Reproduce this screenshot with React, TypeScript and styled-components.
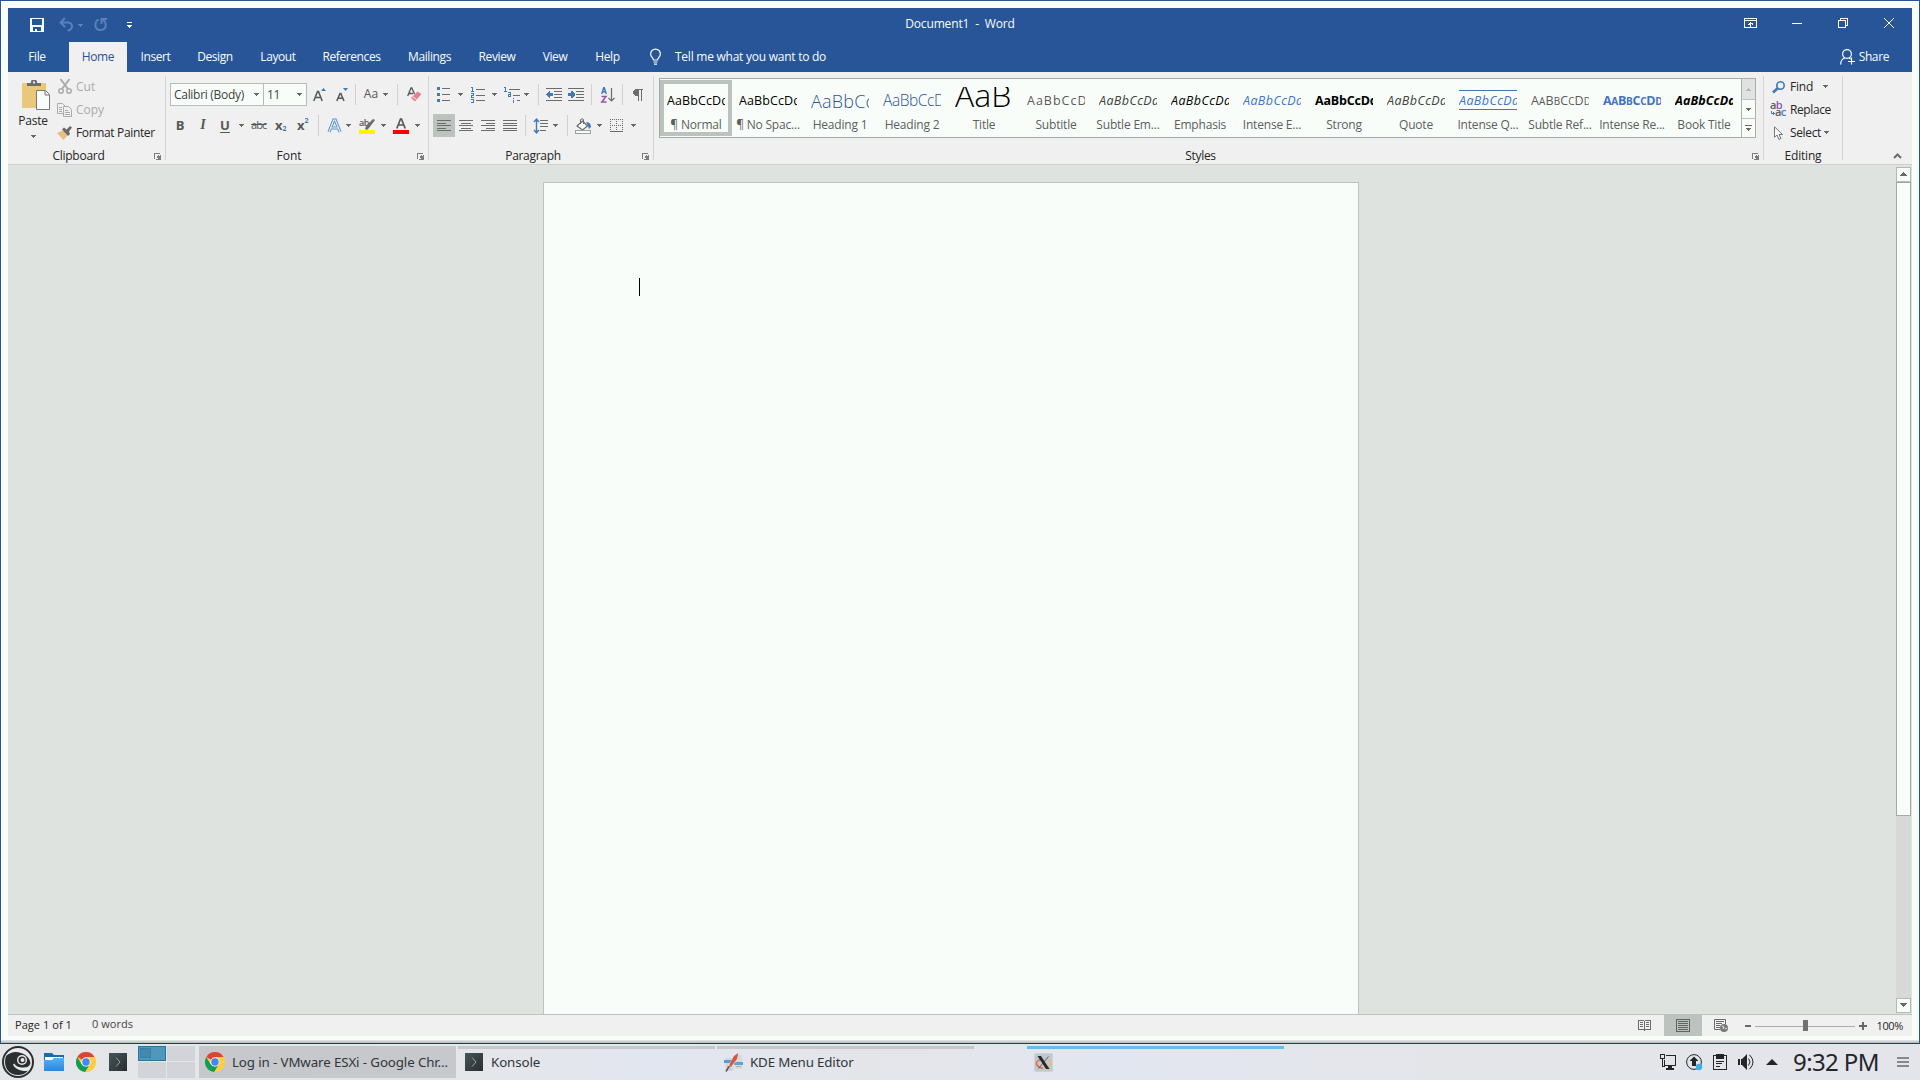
import React from 'react';
import styled, { createGlobalStyle, css } from 'styled-components';

const colors = {
    brand: '#285598',
    paper: '#f8fdf9',
    ribbon: '#f0f0f0',
    canvas: '#dfe3e0',
    line: '#bcc2be',
    divider: '#d2d3d2',
    icon: '#6a6d6b',
    accent: '#3f7ab5',
    text: '#262626',
    label: '#5c605d',
};

const GlobalStyle = createGlobalStyle`
    * {
        box-sizing: border-box;
    }
    body {
        margin: 0;
        overflow: hidden;
        font-family: 'Open Sans', 'Noto Sans', sans-serif;
        font-size: 12px;
        color: ${colors.text};
    }
`;

const Screen = styled.div`
    width: 1920px;
    height: 1080px;
    display: flex;
    flex-direction: column;
`;

const WindowFrame = styled.div`
    height: 1044px;
    padding: 7px 7px 0;
    display: flex;
    flex-direction: column;
    background: ${colors.paper};
    border: 1px solid ${colors.brand};
    border-bottom-color: #1f3a68;
`;

const FrameShadow = styled.div`
    height: 3px;
    margin: 4px -7px 0;
    background: linear-gradient(#e6eae7, #b4bab6);
`;

interface GlyphProps {
    $ml?: number;
    $mt?: number;
}

const Glyph = styled.svg<GlyphProps>`
    display: block;
    flex: none;
    overflow: visible;
    margin-left: ${({ $ml }) => $ml || 0}px;
    margin-top: ${({ $mt }) => $mt || 0}px;
`;

interface TextProps {
    $ml?: number;
    $mt?: number;
    $ls?: number;
    $size?: number;
    $color?: string;
}

const Text = styled.span<TextProps>`
    display: block;
    flex: none;
    white-space: pre;
    line-height: 16px;
    margin-left: ${({ $ml }) => $ml || 0}px;
    margin-top: ${({ $mt }) => $mt || 0}px;
    letter-spacing: ${({ $ls }) => ($ls === undefined ? -0.4 : $ls)}px;
    ${({ $size }) => $size && css`font-size: ${$size}px;`}
    ${({ $color }) => $color && css`color: ${$color};`}
`;

/* ---------- title bar ---------- */

const TitleBar = styled.header`
    flex: none;
    height: 34px;
    display: grid;
    grid-template-columns: 1fr auto 1fr;
    background: ${colors.brand};
    color: ${colors.paper};
`;

const QuickAccess = styled.div`
    display: flex;
    align-items: flex-start;
    padding: 10px 0 0 22px;
`;

const WindowTitle = styled.div`
    padding-top: 8px;
`;

const WindowButtons = styled.div`
    display: flex;
    justify-content: flex-end;
    padding: 10px 18px 0 0;
`;

const TabBar = styled.nav`
    flex: none;
    height: 30px;
    display: flex;
    background: ${colors.brand};
    color: ${colors.paper};
`;

const Tab = styled.div<{ $w: number; $kind?: 'file' | 'active' }>`
    width: ${({ $w }) => $w}px;
    display: flex;
    justify-content: center;
    padding-top: 7px;
    ${({ $kind }) =>
        $kind === 'file' &&
        css`
            padding-right: 3px;
            background: #265899;
        `}
    ${({ $kind }) =>
        $kind === 'active' &&
        css`
            background: ${colors.ribbon};
            color: ${colors.brand};
        `}
`;

const TabExtra = styled.div<{ $right?: boolean }>`
    display: flex;
    align-items: flex-start;
    padding-top: 7px;
    ${({ $right }) =>
        $right
            ? css`
                  margin-left: auto;
                  padding-right: 23px;
              `
            : css`
                  padding-left: 17px;
              `}
`;

/* ---------- ribbon ---------- */

const Ribbon = styled.section`
    flex: none;
    height: 93px;
    display: flex;
    background: ${colors.ribbon};
    border-bottom: 1px solid #cfd1cf;
`;

const Group = styled.div<{ $w: number }>`
    flex: none;
    width: ${({ $w }) => $w}px;
`;

const GroupDivider = styled.div`
    flex: none;
    width: 1px;
    height: 84px;
    margin-top: 4px;
    background: ${colors.divider};
`;

const GroupBody = styled.div`
    height: 76px;
    display: flex;
`;

const GroupFooter = styled.div`
    height: 16px;
    display: flex;
`;

const GroupLabel = styled.div`
    flex: 1;
    display: flex;
    justify-content: center;
`;

const PasteButton = styled.div`
    width: 49px;
    padding: 7px 0 0 1px;
    display: flex;
    flex-direction: column;
    align-items: center;
`;

const Stack = styled.div`
    padding-top: 3px;
`;

const StackRow = styled.div`
    height: 23px;
    display: flex;
    align-items: center;
`;

const StackIcon = styled.div<{ $w: number }>`
    width: ${({ $w }) => $w}px;
    display: flex;
    justify-content: center;
`;

const ToolRows = styled.div<{ $pl: number }>`
    padding: 11px 0 0 ${({ $pl }) => $pl}px;
    display: flex;
    flex-direction: column;
    gap: 8px;
`;

const ToolRow = styled.div`
    height: 23px;
    display: flex;
    align-items: center;
`;

const Rule = styled.div<{ $ml: number }>`
    flex: none;
    width: 1px;
    height: 21px;
    margin-left: ${({ $ml }) => $ml}px;
    background: #cfd0cf;
`;

const Combo = styled.div<{ $w: number; $joined?: boolean }>`
    flex: none;
    width: ${({ $w }) => $w}px;
    height: 23px;
    display: flex;
    align-items: center;
    justify-content: space-between;
    padding: 0 4px 0 3px;
    background: ${colors.paper};
    border: 1px solid #b6bcb8;
    color: #3f4240;
    margin-left: ${({ $joined }) => ($joined ? -1 : 0)}px;
`;

const Letter = styled.span<{ $w: number; $ml?: number }>`
    flex: none;
    width: ${({ $w }) => $w}px;
    margin-top: -1px;
    margin-left: ${({ $ml }) => $ml || 0}px;
    text-align: center;
    line-height: 16px;
    white-space: nowrap;
    color: #555856;
    b, i, u {
        font-size: 13px;
    }
    i {
        font-family: 'Liberation Serif', serif;
        font-weight: 700;
        font-size: 14px;
    }
    u {
        font-weight: 700;
        text-underline-offset: 2px;
    }
`;

const Script = styled.span<{ $ml: number; $up?: boolean }>`
    flex: none;
    width: 14px;
    display: flex;
    align-items: ${({ $up }) => ($up ? 'flex-start' : 'flex-end')};
    margin-top: -2px;
    margin-left: ${({ $ml }) => $ml}px;
    height: 16px;
    line-height: 16px;
    font-size: 13px;
    font-weight: 700;
    color: #555856;
    small {
        font-size: 7px;
        line-height: 8px;
        color: ${colors.accent};
    }
`;

const Struck = styled.span`
    flex: none;
    width: 16px;
    margin-top: -1px;
    margin-left: 7px;
    font-size: 11px;
    letter-spacing: -0.9px;
    line-height: 16px;
    color: #555856;
    text-decoration: line-through;
`;

const Toggle = styled.div`
    width: 22px;
    height: 23px;
    display: flex;
    align-items: center;
    justify-content: center;
    background: ${colors.line};
`;

/* ---------- styles gallery ---------- */

const Gallery = styled.div`
    width: 1097px;
    height: 60px;
    margin: 6px 0 0 5px;
    display: flex;
    background: ${colors.paper};
    border: 1px solid #a3aaae;
`;

const StyleCard = styled.div<{ $selected?: boolean }>`
    flex: none;
    width: 72px;
    height: 56px;
    margin-top: 1px;
    padding: ${({ $selected }) => ($selected ? '3px 3px 0' : '7px 7px 0')};
    ${({ $selected }) => $selected && css`border: 4px solid ${colors.line};`}
`;

interface SampleProps {
    $size?: number;
    $color?: string;
    $weight?: number;
    $italic?: boolean;
    $ruled?: boolean;
    $ls?: number;
    $lh?: number;
}

const Sample = styled.div<SampleProps>`
    width: 58px;
    height: 26px;
    overflow: hidden;
    white-space: nowrap;
    line-height: ${({ $lh }) => $lh || 28}px;
    font-size: ${({ $size }) => $size || 12.5}px;
    color: ${({ $color }) => $color || '#000'};
    font-weight: ${({ $weight }) => $weight || 400};
    font-style: ${({ $italic }) => ($italic ? 'italic' : 'normal')};
    letter-spacing: ${({ $ls }) => $ls || 0}px;
    small {
        font-size: 0.8em;
    }
    ${({ $ruled }) =>
        $ruled &&
        css`
            height: 20px;
            margin: 3px 0 7px;
            line-height: 20px;
            border-top: 1px solid #4472c4;
            border-bottom: 1px solid #4472c4;
        `}
`;

const StyleName = styled.div`
    margin: 4px -7px 0;
    text-align: center;
    line-height: 16px;
    letter-spacing: -0.2px;
    white-space: nowrap;
    color: ${colors.label};
`;

const GalleryNav = styled.div`
    width: 15px;
    margin: -1px -1px -1px auto;
    display: grid;
    grid-template-rows: 20px 19px 19px;
    border: 1px solid #a9afac;
`;

const NavCell = styled.div<{ $off?: boolean }>`
    display: flex;
    align-items: center;
    justify-content: center;
    background: ${({ $off }) => ($off ? '#dfe2e0' : colors.paper)};
    & + & {
        border-top: 1px solid ${colors.line};
    }
`;

/* ---------- document ---------- */

const Workspace = styled.main`
    flex: none;
    height: 850px;
    display: flex;
    background: ${colors.canvas};
    border-bottom: 1px solid #bcc3be;
`;

const Page = styled.article`
    width: 816px;
    margin: 17px 0 0 535px;
    padding: 95px;
    background: ${colors.paper};
    border: 1px solid ${colors.line};
    border-bottom: 0;
`;

const Caret = styled.div`
    width: 1px;
    height: 18px;
    background: #000;
`;

const ScrollBar = styled.div`
    width: 15px;
    height: 846px;
    margin: 2px 1px 0 auto;
    display: flex;
    flex-direction: column;
    background: #d8d8d8;
`;

const ScrollButton = styled.div`
    height: 15px;
    display: flex;
    align-items: center;
    justify-content: center;
    padding-bottom: 1px;
    background: ${colors.paper};
    border: 1px solid #b4b9b6;
`;

const ScrollThumb = styled.div`
    height: 634px;
    margin-bottom: auto;
    background: ${colors.paper};
    border: 1px solid #a6a9a7;
`;

/* ---------- status bar ---------- */

const StatusBar = styled.footer`
    flex: none;
    height: 21px;
    display: flex;
    align-items: center;
    background: ${colors.ribbon};
`;

const StatusRight = styled.div`
    display: flex;
    align-items: center;
    height: 21px;
    margin-left: auto;
    padding-right: 9px;
`;

const ViewToggle = styled.div`
    width: 38px;
    height: 21px;
    margin-left: 13px;
    padding-left: 12px;
    display: flex;
    align-items: center;
    background: ${colors.line};
`;

const ZoomTrack = styled.div`
    width: 100px;
    height: 11px;
    margin-left: 4px;
    display: flex;
    justify-content: center;
    background: linear-gradient(#a9adab, #a9adab) 0 6px / 100% 1px no-repeat;
`;

const ZoomThumb = styled.div`
    width: 5px;
    height: 11px;
    background: #6f7271;
`;

/* ---------- desktop panel ---------- */

const Panel = styled.div`
    height: 36px;
    display: flex;
    background: linear-gradient(90deg, #e4e5e9 0%, #e5e6ea 25%, #e2e6f0 34%, #e4e5e9 45%, #e2e6f0 58%, #e4e5e9 75%, #e3e5ea 100%);
    font-family: 'Noto Sans', sans-serif;
    color: #31363b;
`;

const Launchers = styled.div`
    display: flex;
    align-items: center;
    width: 138px;
    padding-left: 2px;
`;

const Pager = styled.div`
    width: 57px;
    height: 32px;
    margin-top: 2px;
    display: grid;
    grid-template-columns: 28px 28px;
    grid-template-rows: 15px 16px;
    gap: 1px;
`;

const Desk = styled.div<{ $active?: boolean }>`
    background: #d2d4d9;
    ${({ $active }) =>
        $active &&
        css`
            background: #5096bd;
            border: 1px solid #2e7396;
            &::before {
                content: '';
                display: block;
                width: 9px;
                height: 8px;
                margin: 1px;
                background: #4288b0;
                border: 1px solid #3b7fa5;
            }
        `}
`;

const Task = styled.div<{ $ml: number; $bar: string; $active?: boolean }>`
    width: 257px;
    height: 32px;
    margin: 2px 0 0 ${({ $ml }) => $ml}px;
    padding-left: 6px;
    display: flex;
    align-items: center;
    border-top: 3px solid ${({ $bar }) => $bar};
    padding-bottom: 3px;
    background: ${({ $active }) => ($active ? '#c6c8cc' : 'transparent')};
`;

const TaskIcon = styled.div`
    width: 20px;
    display: flex;
    justify-content: center;
`;

const Tray = styled.div`
    display: flex;
    align-items: center;
    margin-left: auto;
    padding-right: 11px;
`;

const Clock = styled.div`
    width: 88px;
    margin-left: 15px;
    font-size: 24px;
    letter-spacing: -0.6px;
    line-height: 32px;
    white-space: nowrap;
    color: #232629;
`;

/* ---------- icons ---------- */

const Arrow = ({ ml, mt, color = '#666967' }: { ml?: number; mt?: number; color?: string }) => (
    <Glyph $ml={ml} $mt={mt} width={5} height={3} shapeRendering="crispEdges">
        <path d="M0 0h5v1H0zM1 1h3v1H1zM2 2h1v1H2z" fill={color} />
    </Glyph>
);

const Launcher = () => (
    <Glyph $mt={5} width={16} height={7} viewBox="-5 0 16 7" shapeRendering="crispEdges">
        <path d="M0 6V0h6v1H1v5zM3 3l1-1 2 2V2h1v5H2V6h2z" fill="#7c7f7d" />
    </Glyph>
);

const Lines = ({ ml, rows }: { ml?: number; rows: number[][] }) => (
    <Glyph $ml={ml} width={14} height={11} shapeRendering="crispEdges">
        {rows.map(([x, w], i) => (
            <rect key={i} x={x} y={i * 2.5} width={w} height={1} fill={colors.icon} />
        ))}
    </Glyph>
);

const ChromeIcon = () => (
    <svg width={20} height={20} viewBox="0 0 20 20">
        <circle cx={10} cy={10} r={10} fill="#ffcd42" />
        <path d="M10 10 1.3 5A10 10 0 0 1 18.7 5.300H10z" fill="#dc4437" />
        <path d="M10 10 5.700 12.500 1.300 5A10 10 0 0 0 9.300 20L14 12.300z" fill="#109d58" />
        <path d="M10 5.300h8.700A10 10 0 0 1 9.300 20L14 12.300z" fill="#ffcd42" />
        <circle cx={10} cy={10} r={4.700} fill="#f1f1f1" />
        <circle cx={10} cy={10} r={3.700} fill="#4285f4" />
    </svg>
);

const TerminalIcon = ({ ml }: { ml?: number }) => (
    <Glyph $ml={ml} width={18} height={18}>
        <defs>
            <linearGradient id="term" x1="0" y1="0" x2="1" y2="1">
                <stop offset="0" stopColor="#46565a" />
                <stop offset="1" stopColor="#2a2d30" />
            </linearGradient>
        </defs>
        <rect width={18} height={18} fill="url(#term)" />
        <path d="M7 4.500 11 9 7 13.500" fill="none" stroke="#9aa2a4" />
    </Glyph>
);

const FolderIcon = () => (
    <Glyph $ml={10} width={20} height={18}>
        <path d="M0 0h8l2 2h10v6H0z" fill="#1d6ba0" />
        <path d="M1 4h18v4H1z" fill="#fff" />
        <defs>
            <linearGradient id="fold" x1="0" y1="0" x2="0" y2="1">
                <stop offset="0" stopColor="#56b0f4" />
                <stop offset="1" stopColor="#2a87de" />
            </linearGradient>
        </defs>
        <path d="M0 7h8l2-2h10v13H0z" fill="url(#fold)" />
    </Glyph>
);

const StartIcon = () => (
    <Glyph width={32} height={32} viewBox="0 0 32 32">
        <circle cx={16} cy={16} r={15} fill="#e9eaed" stroke="#2b2f30" strokeWidth={2} />
        <path
            d="M4 10C8 6 14 5 19 7c6 2 9 6 9.500 10-1 4-4 4.500-8 4.500-3 0-7-1-8-4l-1.500 1c2 4 6 6 11 6.500 2 0 3 0 4-.5-2 3-6 4.500-10 4.500C8 29 3 23 3 16c0-2 .3-4 1-6z"
            fill="#2b2f30"
        />
        <circle cx={20} cy={14} r={5} fill="#e9eaed" />
        <circle cx={20} cy={14} r={3.600} fill="#2b2f30" />
        <circle cx={20.500} cy={14} r={2} fill="#e9eaed" />
        <path d="M5 8 8.500 5l.5 2z" fill="#e9eaed" />
    </Glyph>
);

const MenuEditorIcon = () => (
    <svg width={19} height={19} viewBox="0 0 19 19">
        <rect x={1.500} y={5} width={8} height={13} fill="#d3d7d8" />
        <rect x={11} y={2} width={7} height={14} fill="#d6dadb" />
        <path d="M3 13.500h5M3 16h4M12 13.500h5" stroke="#aab5b2" />
        <rect y={7} width={9} height={3} fill="#4f9fd0" />
        <rect x={10} y={9} width={9} height={3} fill="#5aa7d6" />
        <path d="M14.500 0 12.500 8 3 18.500 1.500 18 8 6z" fill="#e9ebed" opacity={0.7} />
        <path d="M14.200 0 13 6 7.500 13 4.500 15 6 10.500 10 3z" fill="#d95340" />
        <path d="m5 13.500-3 5" stroke="#5a5250" strokeWidth={1.500} />
    </svg>
);

const XIcon = () => (
    <svg width={19} height={19} viewBox="0 0 19 19">
        <rect x={0.500} y={0.500} width={18} height={18} rx={1} fill="#c0cace" stroke="#ccd4d8" />
        <path d="M7 6.500C3 7.500 1.500 10 3 12c1 1.800 3 3 6 3" fill="none" stroke="#e0714a" strokeWidth={1.700} />
        <path d="M9 15c4 0 7-1.500 7.500-4 .3-2-1-3.500-3-4.500" fill="none" stroke="#e8b87c" strokeWidth={1.400} />
        <path d="M14.500 3.500 4.500 15.500" stroke="#5d6467" />
        <path d="M3.500 3h3.500L15.500 16H12z" fill="#26292b" />
    </svg>
);

/* ---------- data ---------- */

const tabs: { name: string; w: number; kind?: 'file' | 'active' }[] = [
    { name: 'File', w: 61, kind: 'file' },
    { name: 'Home', w: 58, kind: 'active' },
    { name: 'Insert', w: 57 },
    { name: 'Design', w: 62 },
    { name: 'Layout', w: 64 },
    { name: 'References', w: 83 },
    { name: 'Mailings', w: 73 },
    { name: 'Review', w: 62 },
    { name: 'View', w: 54 },
    { name: 'Help', w: 51 },
];

const blue = '#4472c4';

const gallery: (SampleProps & { name: string; text?: string; caps?: boolean })[] = [
    { name: '¶ Normal', $ls: 0.1 },
    { name: '¶ No Spac...', $ls: 0.1 },
    { name: 'Heading 1', $size: 18, $weight: 300, $color: '#2f5496', $ls: 0.2 },
    { name: 'Heading 2', $size: 15.5, $weight: 300, $color: '#2f5496', $ls: -0.4, $lh: 26 },
    { name: 'Title', $size: 32, $weight: 300, text: 'AaB', $lh: 15 },
    { name: 'Subtitle', $color: '#5a5a5a', $ls: 1 },
    { name: 'Subtle Em...', $italic: true, $color: '#404040', $ls: 0.4 },
    { name: 'Emphasis', $italic: true, $ls: 0.4 },
    { name: 'Intense E...', $italic: true, $color: blue, $ls: 0.4 },
    { name: 'Strong', $weight: 700, $ls: -0.2 },
    { name: 'Quote', $italic: true, $color: '#404040', $ls: 0.4 },
    { name: 'Intense Q...', $italic: true, $color: blue, $ruled: true, $ls: 0.4 },
    { name: 'Subtle Ref...', caps: true, $color: '#5a5a5a', $ls: 0.1 },
    { name: 'Intense Re...', caps: true, $weight: 700, $color: blue, $ls: -0.3 },
    { name: 'Book Title', $weight: 700, $italic: true, $ls: 0.1 },
];

/* ---------- sections ---------- */

const Header = () => (
    <>
        <TitleBar>
            <QuickAccess>
                <Glyph width={14} height={14} shapeRendering="crispEdges">
                    <path fillRule="evenodd" d="M0 0h14v14H0zM2 1v6h10V1zM3 9v4h2v-2h2v2h4V9z" fill={colors.paper} />
                </Glyph>
                <Glyph $ml={15} width={14} height={13} fill="none" stroke="#5a80b8" strokeWidth={2}>
                    <path d="M6 0 1.500 4.500 6 9M2 4.500h7.500c5 1 4.500 7.500-1 8" />
                </Glyph>
                <Arrow ml={5} mt={6} color="#5a80b8" />
                <Glyph $ml={11} width={13} height={13} fill="none" stroke="#5a80b8" strokeWidth={2}>
                    <path d="M4.500 1.500C0 4 0 12 6.500 12S13 4.500 9 2M7.500 6V1H13" />
                </Glyph>
                <Glyph $ml={20} $mt={4} width={5} height={6} shapeRendering="crispEdges">
                    <path d="M0 0h5v1H0zM0 3h5v1H0zM1 4h3v1H1zM2 5h1v1H2z" fill={colors.paper} />
                </Glyph>
            </QuickAccess>
            <WindowTitle>
                <Text $ls={-0.15}>Document1  -  Word</Text>
            </WindowTitle>
            <WindowButtons>
                <Glyph width={13} height={10} fill="none" stroke={colors.paper} shapeRendering="crispEdges">
                    <path d="M.5.5h12v9H.5zM0 2.500h13M6.500 4v5M4 6.500h1v-1h3v1h1" />
                </Glyph>
                <Glyph $ml={35} $mt={5} width={10} height={1}>
                    <rect width={10} height={1} fill={colors.paper} />
                </Glyph>
                <Glyph $ml={36} width={10} height={10} fill="none" stroke={colors.paper} shapeRendering="crispEdges">
                    <path d="M.5 2.500h7v7h-7zM2.500 2V.5h7v7H8" />
                </Glyph>
                <Glyph $ml={36} width={10} height={10} stroke={colors.paper}>
                    <path d="M0 0l10 10M10 0 0 10" />
                </Glyph>
            </WindowButtons>
        </TitleBar>
        <TabBar>
            {tabs.map((tab) => (
                <Tab key={tab.name} $w={tab.w} $kind={tab.kind}>
                    <Text>{tab.name}</Text>
                </Tab>
            ))}
            <TabExtra>
                <Glyph width={11} height={16} fill="none" stroke={colors.paper} strokeWidth={1.200}>
                    <path d="M3.500 11C3.500 9 .6 8 .6 5a4.900 4.900 0 0 1 9.800 0c0 3-2.900 4-2.900 6zM3.500 13h4M4 15.200h3" />
                </Glyph>
                <Text $ml={14} $ls={-0.25}>Tell me what you want to do</Text>
            </TabExtra>
            <TabExtra $right>
                <Glyph width={15} height={16} fill="none" stroke={colors.paper} strokeWidth={1.200}>
                    <circle cx={7} cy={5} r={4.400} />
                    <path d="M.6 15.500C.8 12 2.500 9.500 5 9M9 9l1.500 1M11.500 8.500v7M8 12.500h7" />
                </Glyph>
                <Text $ml={4}>Share</Text>
            </TabExtra>
        </TabBar>
    </>
);

const ClipboardGroup = () => (
    <Group $w={157}>
        <GroupBody>
            <PasteButton>
                <Glyph $ml={5} width={28} height={31}>
                    <rect y={4} width={24} height={25} rx={1} fill="#e9c77b" />
                    <path fillRule="evenodd" d="M5 7V4h4V2l1-1h4l1 1v2h4v3zM11 2.500v2h2v-2z" fill="#6c6c6c" />
                    <path d="M14.500 11.500h9l4 4v15h-13z" fill={colors.paper} stroke="#777" />
                    <path d="M23 12v4h4" fill="none" stroke="#777" />
                </Glyph>
                <Text $mt={3} $ls={-0.2}>Paste</Text>
                <Arrow mt={6} />
            </PasteButton>
            <Stack>
                <StackRow>
                    <StackIcon $w={15}>
                        <Glyph width={14} height={15} fill="none" stroke="#aaacab" strokeWidth={1.500}>
                            <path d="M2.500 0 10 10M11.500 0 4 10" strokeWidth={2} />
                            <circle cx={3} cy={12} r={2.200} />
                            <circle cx={11} cy={12} r={2.200} />
                        </Glyph>
                    </StackIcon>
                    <Text $ml={4} $ls={0} $color="#aaacab">Cut</Text>
                </StackRow>
                <StackRow>
                    <StackIcon $w={15}>
                        <Glyph width={15} height={14} fill={colors.ribbon} stroke="#aaacab">
                            <path d="M.5.5h5l3 3v7h-8zM2 4.500h3M2 6.500h3M2 8.500h3" />
                            <path d="M6.500 3.500h5l3 3v7h-8zM8 7.500h3M8 9.500h5M8 11.500h5" />
                        </Glyph>
                    </StackIcon>
                    <Text $ml={4} $ls={0} $color="#aaacab">Copy</Text>
                </StackRow>
                <StackRow>
                    <StackIcon $w={15}>
                        <Glyph width={15} height={14}>
                            <path d="M0 7 6 4.500l4.500 5L6.500 14z" fill="#e8bf80" />
                            <path d="m5 3.500 2-2 2.500 2L13 0l2 1.500-3 4 1 2.500-2 2z" fill="#6a6a6a" />
                        </Glyph>
                    </StackIcon>
                    <Text $ml={4} $ls={-0.35}>Format Painter</Text>
                </StackRow>
            </Stack>
        </GroupBody>
        <GroupFooter>
            <GroupLabel>
                <Text $ls={-0.25}>Clipboard</Text>
            </GroupLabel>
            <Launcher />
        </GroupFooter>
    </Group>
);

const FontGroup = () => (
    <Group $w={262}>
        <GroupBody>
            <ToolRows $pl={4}>
                <ToolRow>
                    <Combo $w={94}>
                        <Text $ls={-0.3}>Calibri (Body)</Text>
                        <Arrow />
                    </Combo>
                    <Combo $w={44} $joined>
                        <Text>11</Text>
                        <Arrow />
                    </Combo>
                    <Glyph $ml={6} width={13} height={14}>
                        <path d="M.8 13 4.500 3.500h1L9.200 13M2.200 9.500h5.600" fill="none" stroke="#555856" strokeWidth={1.500} />
                        <path d="M8 3l2.500-3L13 3z" fill={colors.accent} />
                    </Glyph>
                    <Glyph $ml={10} width={12} height={14}>
                        <path d="M.8 13 4 5.500h.8L8 13M2 10.200h4.800" fill="none" stroke="#555856" strokeWidth={1.500} />
                        <path d="M7 0l2.500 3L12 0z" fill={colors.accent} />
                    </Glyph>
                    <Rule $ml={7} />
                    <Letter $w={16} $ml={7}>Aa</Letter>
                    <Arrow ml={4} />
                    <Rule $ml={9} />
                    <Glyph $ml={9} width={14} height={15}>
                        <path d="M.7 9 4 1h.8L7.500 7M2 6.500h4" fill="none" stroke="#555856" strokeWidth={1.300} />
                        <path d="m4 11 6.500-6.500 4 2.500L8 14.500z" fill="#e4828d" />
                        <path d="m5.500 9.500 4 3" stroke="#f3f0f0" />
                    </Glyph>
                </ToolRow>
                <ToolRow>
                    <Letter $w={20}><b>B</b></Letter>
                    <Letter $w={16} $ml={5}><i>I</i></Letter>
                    <Letter $w={16} $ml={6}><u>U</u></Letter>
                    <Arrow ml={6} />
                    <Struck>abc</Struck>
                    <Script $ml={8}>x<small>2</small></Script>
                    <Script $ml={8} $up>x<small>2</small></Script>
                    <Rule $ml={7} />
                    <Glyph $ml={9} width={13} height={14}>
                        <path d="M1 13 5.700 1h1.600L12 13M3 9h7" fill="none" stroke="#5a95cc" strokeWidth={3.200} />
                        <path d="M1 13 5.700 1h1.600L12 13M3 9h7" fill="none" stroke={colors.ribbon} strokeWidth={1.100} />
                    </Glyph>
                    <Arrow ml={5} />
                    <Glyph $ml={8} width={16} height={16}>
                        <text x={0} y={8} fontSize={9} fontWeight={600} fill="#555856" letterSpacing={-0.5}>ab</text>
                        <path d="m6 11 1-3 7-7 2 1-6 8-2 2z" fill="#6a6a6a" />
                        <rect y={12} width={16} height={4} fill="#fff200" />
                    </Glyph>
                    <Arrow ml={6} />
                    <Glyph $ml={7} width={16} height={16}>
                        <path d="M3.800 10.500 7.500 1h1L12.200 10.500M5 7h6" fill="none" stroke="#555856" strokeWidth={1.700} />
                        <rect y={12} width={16} height={4} fill="#fe0000" />
                    </Glyph>
                    <Arrow ml={6} />
                </ToolRow>
            </ToolRows>
        </GroupBody>
        <GroupFooter>
            <GroupLabel>
                <Text $ls={0}>Font</Text>
            </GroupLabel>
            <Launcher />
        </GroupFooter>
    </Group>
);

const ParagraphGroup = () => (
    <Group $w={224}>
        <GroupBody>
            <ToolRows $pl={4}>
                <ToolRow>
                    <Glyph $ml={4} width={13} height={15} shapeRendering="crispEdges">
                        <path d="M0 0h3v3H0zM0 6h3v3H0zM0 12h3v3H0z" fill={colors.accent} />
                        <path d="M5 1h8v1H5zM5 7h8v1H5zM5 13h8v1H5z" fill={colors.icon} />
                    </Glyph>
                    <Arrow ml={8} />
                    <Glyph $ml={8} width={14} height={16} shapeRendering="crispEdges">
                        <path d="M0 0h2v4H1V1H0zM0 4h3v1H0zM0 6h3v3H1v1h2v1H0V8h2V7H0zM0 12h3v4H0v-1h2v-1H0v0h2v-1H0z" fill={colors.accent} />
                        <path d="M5 2h9v1H5zM5 8h9v1H5zM5 13h9v1H5z" fill={colors.icon} />
                    </Glyph>
                    <Arrow ml={7} />
                    <Glyph $ml={7} width={16} height={16} shapeRendering="crispEdges">
                        <path d="M0 0h2v4H1V1H0zM0 4h3v1H0zM4 5h3v5H4V7h2V6H4zM5 8v1h1V8zM9 11h1v1H9zM9 13h1v3H9z" fill={colors.accent} />
                        <path d="M5 2h11v1H5zM9 8h7v1H9zM13 13h3v1h-3z" fill={colors.icon} />
                    </Glyph>
                    <Arrow ml={4} />
                    <Rule $ml={9} />
                    <Glyph $ml={7} width={16} height={13} shapeRendering="crispEdges">
                        <path d="M0 0h16v1H0zM8 3h8v1H8zM8 6h8v1H8zM8 9h8v1H8zM0 12h16v1H0z" fill={colors.icon} />
                        <path d="M0 6l3-3h1v2h3v3H4v2H3L0 7z" fill={colors.accent} />
                    </Glyph>
                    <Glyph $ml={6} width={16} height={13} shapeRendering="crispEdges">
                        <path d="M0 0h16v1H0zM8 3h8v1H8zM8 6h8v1H8zM8 9h8v1H8zM0 12h16v1H0z" fill={colors.icon} />
                        <path d="M7 6L4 3H3v2H0v3h3v2h1l3-3z" fill={colors.accent} />
                    </Glyph>
                    <Rule $ml={7} />
                    <Glyph $ml={9} width={14} height={16} fill="none">
                        <path d="M.7 7 2.700.8h.6L5.300 7M1.500 4.800h3" stroke={colors.accent} strokeWidth={1.400} />
                        <path d="M.5 9.500h4.500L.8 15H5.500" stroke="#8e57ad" strokeWidth={1.500} />
                        <path d="M10.500 1v13M7.500 11l3 3 3-3" stroke={colors.icon} strokeWidth={1.200} />
                    </Glyph>
                    <Rule $ml={7} />
                    <Glyph $ml={10} width={10} height={12} shapeRendering="crispEdges">
                        <path d="M3 0h7v1H9v11H8V1H6v11H5V7H3L1 6 0 5V2l1-1z" fill={colors.icon} />
                    </Glyph>
                </ToolRow>
                <ToolRow>
                    <Toggle>
                        <Lines rows={[[0, 14], [0, 9], [0, 14], [0, 9], [0, 14]]} />
                    </Toggle>
                    <Lines ml={4} rows={[[0, 14], [2, 10], [0, 14], [2, 10], [0, 14]]} />
                    <Lines ml={8} rows={[[0, 14], [5, 9], [0, 14], [5, 9], [0, 14]]} />
                    <Lines ml={8} rows={[[0, 14], [0, 14], [0, 14], [0, 14], [0, 14]]} />
                    <Rule $ml={8} />
                    <Glyph $ml={8} width={14} height={16}>
                        <path d="M6 2.500h8M6 5.500h8M6 8.500h8M6 12.500h6" stroke={colors.icon} />
                        <path d="M2.500 1v14M0 4l2.500-3L5 4M0 12l2.500 3L5 12" fill="none" stroke={colors.accent} strokeWidth={1.400} />
                    </Glyph>
                    <Arrow ml={5} />
                    <Rule $ml={9} />
                    <Glyph $ml={7} width={16} height={16}>
                        <path d="m7.500 3 5 5-5 4L2 8z" fill={colors.paper} stroke={colors.icon} strokeWidth={1.200} />
                        <path d="M5.500 6V1.500Q7 0 8.500 1.500V6" fill="none" stroke={colors.icon} />
                        <path d="M11 4c4 0 5 3 5 5l-2 2-1-3z" fill={colors.accent} />
                        <rect x={0.500} y={12.500} width={15} height={3} fill={colors.paper} stroke="#9da19f" />
                    </Glyph>
                    <Arrow ml={6} />
                    <Glyph $ml={8} width={13} height={13}>
                        <path d="M.5 0v12M12.500 0v12M0 .5h13M6.500 0v12M0 6.500h13" stroke={colors.icon} strokeDasharray="1 1" />
                        <path d="M0 12.500h13" stroke={colors.icon} />
                    </Glyph>
                    <Arrow ml={8} />
                </ToolRow>
            </ToolRows>
        </GroupBody>
        <GroupFooter>
            <GroupLabel>
                <Text $ls={-0.3}>Paragraph</Text>
            </GroupLabel>
            <Launcher />
        </GroupFooter>
    </Group>
);

const SmallCaps = () => (
    <>
        {['A', 'B', 'C', 'D'].map((letter) => (
            <React.Fragment key={letter}>
                {letter}
                <small>{letter}</small>
            </React.Fragment>
        ))}
    </>
);

const StylesGroup = () => (
    <Group $w={1109}>
        <GroupBody>
            <Gallery>
                {gallery.map(({ name, text, caps, ...sample }, index) => (
                    <StyleCard key={name} $selected={index === 0}>
                        <Sample {...sample}>{caps ? <SmallCaps /> : text || 'AaBbCcDd'}</Sample>
                        <StyleName>{name}</StyleName>
                    </StyleCard>
                ))}
                <GalleryNav>
                    <NavCell $off>
                        <Glyph width={5} height={3} shapeRendering="crispEdges">
                            <path d="M2 0h1v1H2zM1 1h3v1H1zM0 2h5v1H0z" fill="#b4b8b5" />
                        </Glyph>
                    </NavCell>
                    <NavCell>
                        <Arrow />
                    </NavCell>
                    <NavCell>
                        <Glyph width={7} height={6} shapeRendering="crispEdges">
                            <path d="M0 0h7v1H0zM1 3h5v1H1zM2 4h3v1H2zM3 5h1v1H3z" fill="#666967" />
                        </Glyph>
                    </NavCell>
                </GalleryNav>
            </Gallery>
        </GroupBody>
        <GroupFooter>
            <GroupLabel>
                <Text $ls={-0.3}>Styles</Text>
            </GroupLabel>
            <Launcher />
        </GroupFooter>
    </Group>
);

const EditingGroup = () => (
    <Group $w={78}>
        <GroupBody>
            <Stack>
                <StackRow>
                    <StackIcon $w={29}>
                        <Glyph width={13} height={12} fill="none" stroke={colors.accent}>
                            <circle cx={8.500} cy={4.500} r={3.700} strokeWidth={1.600} />
                            <path d="M6 7 1 11.500" strokeWidth={2.600} />
                        </Glyph>
                    </StackIcon>
                    <Text $ml={-3} $ls={-0.2}>Find</Text>
                    <Arrow ml={10} />
                </StackRow>
                <StackRow>
                    <StackIcon $w={29}>
                        <Glyph width={16} height={15} fontSize={11} fontWeight={600} letterSpacing={-0.6}>
                            <text x={-1} y={7} fill="#5c5c5c">a<tspan fill="#8e57ad">b</tspan></text>
                            <text x={4} y={14} fill="#5c5c5c">a<tspan fill={colors.accent}>c</tspan></text>
                            <path d="M.5 9v2.500h3M2 10l1.500 1.500L2 13" fill="none" stroke={colors.accent} />
                        </Glyph>
                    </StackIcon>
                    <Text $ml={-3} $ls={-0.4}>Replace</Text>
                </StackRow>
                <StackRow>
                    <StackIcon $w={29}>
                        <Glyph width={9} height={14}>
                            <path d="M.5.8v10.500L3 9l2 4.500 2-1L5 8.500h3.500z" fill={colors.paper} stroke="#777" />
                        </Glyph>
                    </StackIcon>
                    <Text $ml={-3} $ls={-0.35}>Select</Text>
                    <Arrow ml={3} />
                </StackRow>
            </Stack>
        </GroupBody>
        <GroupFooter>
            <GroupLabel>
                <Text $ls={-0.2}>Editing</Text>
            </GroupLabel>
        </GroupFooter>
    </Group>
);

const Status = () => (
    <StatusBar>
        <Text $ml={7} $mt={-2} $ls={0.05} $size={11}>Page 1 of 1</Text>
        <Text $ml={20} $mt={-4} $ls={0.05} $size={11} $color="#444">0 words</Text>
        <StatusRight>
            <Glyph $mt={-1} width={13} height={13} fill="none" stroke={colors.icon} shapeRendering="crispEdges">
                <path d="M.5 1.500h5l1 1 1-1h5v9h-5l-1 1-1-1h-5zM6.500 2v10M2 3.500h3M2 5.500h3M2 7.500h3M8 3.500h3M8 5.500h3M8 7.500h3" />
            </Glyph>
            <ViewToggle>
                <Glyph $mt={-1} width={14} height={13} fill="none" stroke="#5f6260" shapeRendering="crispEdges">
                    <path d="M.5.5h13v12H.5zM2 2.500h10M2 4.500h10M2 6.500h10M2 8.500h10M2 10.500h10" />
                </Glyph>
            </ViewToggle>
            <Glyph $ml={12} $mt={-1} width={14} height={13} fill="none" stroke={colors.icon}>
                <path d="M6 10.500H.5V.5h11V5M2 2.500h8M2 4.500h6M2 6.500h4M2 8.500h4" />
                <circle cx={10} cy={9} r={4} fill="#777a78" stroke="none" />
                <path d="M8 7l2 1-1 2M11 10l2-1" stroke={colors.ribbon} />
            </Glyph>
            <Glyph $ml={17} width={6} height={2}>
                <rect width={6} height={2} fill="#666967" />
            </Glyph>
            <ZoomTrack>
                <ZoomThumb />
            </ZoomTrack>
            <Glyph $ml={4} width={7} height={8} shapeRendering="crispEdges">
                <path d="M3 0h2v3h3v2H5v3H3V5H0V3h3z" fill="#666967" />
            </Glyph>
            <Text $ml={10} $size={11} $ls={-0.35}>100%</Text>
        </StatusRight>
    </StatusBar>
);

const TaskPanel = () => (
    <Panel>
        <Launchers>
            <StartIcon />
            <FolderIcon />
            <Glyph $ml={12} width={20} height={20}>
                <ChromeIcon />
            </Glyph>
            <TerminalIcon ml={13} />
        </Launchers>
        <Pager>
            <Desk $active />
            <Desk />
            <Desk />
            <Desk />
        </Pager>
        <Task $ml={4} $bar="#c6c8cc" $active>
            <TaskIcon><ChromeIcon /></TaskIcon>
            <Text $ml={7} $size={13.33} $ls={-0.12}>Log in - VMware ESXi - Google Chr...</Text>
        </Task>
        <Task $ml={2} $bar="#c5c8cd">
            <TaskIcon><TerminalIcon /></TaskIcon>
            <Text $ml={7} $size={13.33} $ls={-0.1}>Konsole</Text>
        </Task>
        <Task $ml={2} $bar="#c5c8cd">
            <TaskIcon><MenuEditorIcon /></TaskIcon>
            <Text $ml={7} $size={13.33} $ls={-0.15}>KDE Menu Editor</Text>
        </Task>
        <Task $ml={53} $bar="#69bde8">
            <TaskIcon><XIcon /></TaskIcon>
        </Task>
        <Tray>
            <Glyph width={16} height={16} fill="none" stroke="#232629" shapeRendering="crispEdges">
                <path d="M.5.5h4v4h-4zM2.500 5v7h2M6 1.500h9.500v10h-11V6" />
                <path d="M8 12h4v2h2v2H6v-2h2z" fill="#232629" stroke="none" />
            </Glyph>
            <Glyph $ml={10} width={16} height={16}>
                <circle cx={8} cy={8} r={7.400} fill="none" stroke="#232629" />
                <path d="M8 2.500 12.500 7H10v5H6V7H3.500z" fill="#232629" />
                <circle cx={13} cy={13} r={3.200} fill="#3daee9" />
            </Glyph>
            <Glyph $ml={11} width={14} height={16} shapeRendering="crispEdges">
                <path d="M.5 1.500h13v14H.5zM3 7.500h8M3 9.500h6M3 12.500h4" fill="none" stroke="#232629" />
                <path d="M3 0h8v5H3z" fill="#232629" />
            </Glyph>
            <Glyph $ml={11} width={16} height={16}>
                <path d="M0 5h2v6H0zM3 5h1l5-5v16l-5-5H3z" fill="#232629" />
                <path d="M10.500 4.500q3 3.500 0 7M11.500.8q7 7.200 0 14.400" fill="none" stroke="#232629" />
            </Glyph>
            <Glyph $ml={12} width={12} height={6}>
                <path d="M0 6 6 0l6 6z" fill="#232629" />
            </Glyph>
            <Clock>9:32 PM</Clock>
            <Glyph $ml={16} width={12} height={10} shapeRendering="crispEdges">
                <path d="M0 0h12v2H0zM0 4h12v2H0zM0 8h12v2H0z" fill="#85888c" />
            </Glyph>
        </Tray>
    </Panel>
);

export default function App() {
    return (
        <Screen>
            <GlobalStyle />
            <WindowFrame>
                <Header />
                <Ribbon>
                    <ClipboardGroup />
                    <GroupDivider />
                    <FontGroup />
                    <GroupDivider />
                    <ParagraphGroup />
                    <GroupDivider />
                    <StylesGroup />
                    <GroupDivider />
                    <EditingGroup />
                    <GroupDivider />
                    <Glyph $ml={50} $mt={81} width={9} height={6}>
                        <path d="M1 5l3.500-3.500L8 5" fill="none" stroke={colors.icon} strokeWidth={2} />
                    </Glyph>
                </Ribbon>
                <Workspace>
                    <Page>
                        <Caret />
                    </Page>
                    <ScrollBar>
                        <ScrollButton>
                            <Glyph width={7} height={4} shapeRendering="crispEdges">
                                <path d="M3 0h1v1H3zM2 1h3v1H2zM1 2h5v1H1zM0 3h7v1H0z" fill="#666967" />
                            </Glyph>
                        </ScrollButton>
                        <ScrollThumb />
                        <ScrollButton>
                            <Glyph width={7} height={4} shapeRendering="crispEdges">
                                <path d="M0 0h7v1H0zM1 1h5v1H1zM2 2h3v1H2zM3 3h1v1H3z" fill="#666967" />
                            </Glyph>
                        </ScrollButton>
                    </ScrollBar>
                </Workspace>
                <Status />
                <FrameShadow />
            </WindowFrame>
            <TaskPanel />
        </Screen>
    );
}
